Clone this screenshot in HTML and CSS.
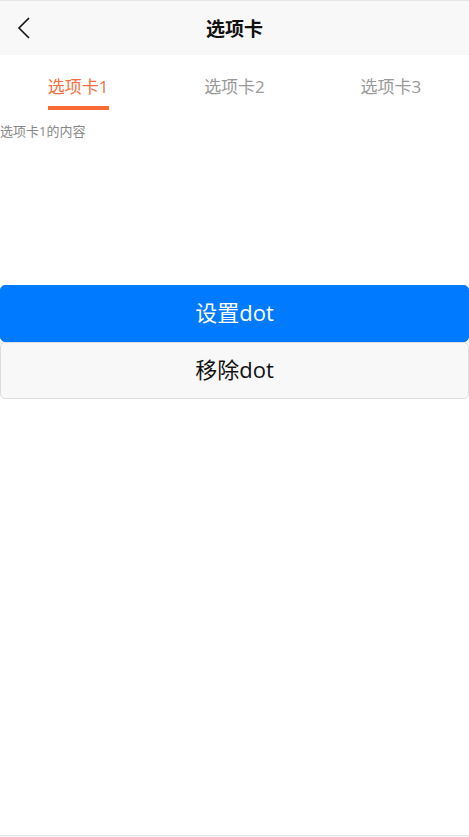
FILE: index.html
```html
<!DOCTYPE html>
<html lang="zh-CN">
<head>
  <meta charset="UTF-8">
  <title>选项卡</title>
  <link rel="stylesheet" href="styles.css">
</head>
<body>
  <div class="page">
    <div class="navbar">
      <span class="back">
        <svg width="14" height="22" viewBox="0 0 14 22">
          <polyline points="12,1 2,11 12,21" fill="none" stroke="#111" stroke-width="1.6"/>
        </svg>
      </span>
      <span class="title">选项卡</span>
    </div>

    <div class="tabs">
      <div class="tab active"><span>选项卡1</span></div>
      <div class="tab"><span>选项卡2</span></div>
      <div class="tab"><span>选项卡3</span></div>
    </div>

    <div class="tab-content">选项卡1的内容</div>

    <button class="btn btn-primary">设置dot</button>
    <button class="btn btn-default">移除dot</button>

    <div class="bottom-line"></div>
  </div>
</body>
</html>
```

FILE: styles.css
```css
* {
  box-sizing: border-box;
}
body {
  margin: 0;
  font-family: "Open Sans", "Noto Sans CJK SC", sans-serif;
  background: white;
}
.page {
  height: 100vh;
  display: flex;
  flex-direction: column;
  border-top: 1px solid #e6e6e6;
}
.navbar {
  height: 54px;
  background: #f8f8f8;
  display: flex;
  align-items: center;
  justify-content: center;
  position: relative;
}
.back {
  position: absolute;
  left: 17px;
  top: 16px;
}
.title {
  font-size: 19px;
  font-weight: bold;
  color: #111;
}
.tabs {
  display: flex;
  height: 56px;
}
.tab {
  flex: 1;
  display: flex;
  justify-content: center;
}
.tab span {
  font-size: 17px;
  color: #999;
  line-height: 24px;
  padding-top: 20px;
  height: 55px;
  border-bottom: 4px solid transparent;
}
.tab.active span {
  color: #f2703f;
  border-bottom-color: #fa6a34;
}
.tab-content {
  font-size: 13px;
  color: #888;
  line-height: 20px;
  margin-top: 10px;
  height: 164px;
}
.btn {
  width: 100%;
  height: 57px;
  padding: 0 0 5px;
  font-family: inherit;
  font-size: 22px;
  border-radius: 5px;
  border: 1px solid #ddd;
}
.btn-primary {
  background: #007aff;
  border-color: #007aff;
  color: white;
}
.btn-default {
  background: #f8f8f8;
  color: #111;
}
.bottom-line {
  margin-top: auto;
  height: 2px;
  border-top: 1px solid #e6e6e6;
  background: #f4f4f4;
}
```
